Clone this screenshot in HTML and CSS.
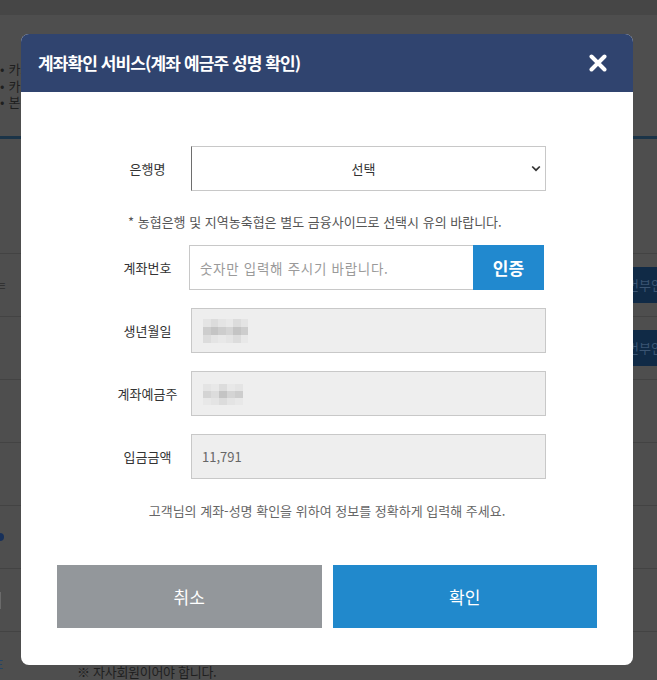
FILE: index.html
```html
<!DOCTYPE html>
<html lang="ko">
<head>
<meta charset="utf-8">
<title>계좌확인 서비스</title>
<link rel="stylesheet" href="styles.css">
</head>
<body>
<div class="page">
  <div class="topbar"></div>
  <ul class="notice">
    <li>카드 결제 시 유의사항을 확인해 주세요.</li>
    <li>카드 취소는 결제일 기준으로 처리됩니다.</li>
    <li>본인 명의의 계좌만 등록 가능합니다.</li>
  </ul>
  <div class="table">
    <div class="row row-first"></div>
    <div class="row"><span class="frag">ㅌ</span><span class="navy-btn">번부인증</span></div>
    <div class="row"><span></span><span class="navy-btn">번부인증</span></div>
    <div class="row"></div>
    <div class="row"></div>
    <div class="row"><span class="dot"></span></div>
    <div class="row"><span class="bar"></span></div>
    <div class="row row-last"><span class="frag blue">E</span><span class="foot-note">※ 자사회원이어야 합니다.</span></div>
  </div>
</div>

<div class="modal">
  <div class="modal-head">
    <h1 class="modal-title">계좌확인 서비스(계좌 예금주 성명 확인)</h1>
    <svg class="close" width="18" height="18" viewBox="0 0 18 18" aria-label="닫기">
      <path d="M2.5 2.5 L15.5 15.5 M15.5 2.5 L2.5 15.5" stroke="#fff" stroke-width="4" stroke-linecap="round" fill="none"/>
    </svg>
  </div>
  <div class="modal-body">
    <div class="form">
      <div class="form-row">
        <div class="label">은행명</div>
        <div class="select">
          <span class="select-text">선택</span>
          <svg class="chev" width="10" height="7" viewBox="0 0 10 7"><path d="M1.2 1.5 L5 5.2 L8.8 1.5" stroke="#333" stroke-width="1.7" fill="none"/></svg>
        </div>
      </div>
      <p class="note">* 농협은행 및 지역농축협은 별도 금융사이므로 선택시 유의 바랍니다.</p>
      <div class="form-row">
        <div class="label">계좌번호</div>
        <div class="input-group">
          <div class="input placeholder">숫자만 입력해 주시기 바랍니다.</div>
          <div class="auth-btn">인증</div>
        </div>
      </div>
      <div class="form-row gap">
        <div class="label">생년월일</div>
        <div class="input disabled">
          <div class="mosaic m-birth">
            <i class="c1"></i><i class="c2"></i><i class="c1"></i><i class="c3"></i><i class="c2"></i><i class="c1"></i>
            <i class="c4"></i><i class="c5"></i><i class="c4"></i><i class="c6"></i><i class="c5"></i><i class="c4"></i>
            <i class="c2"></i><i class="c1"></i><i class="c3"></i><i class="c1"></i><i class="c2"></i><i class="c3"></i>
          </div>
        </div>
      </div>
      <div class="form-row gap">
        <div class="label">계좌예금주</div>
        <div class="input disabled">
          <div class="mosaic m-name">
            <i class="c1"></i><i class="c3"></i><i class="c2"></i><i class="c3"></i><i class="c1"></i>
            <i class="c6"></i><i class="c2"></i><i class="c5"></i><i class="c6"></i><i class="c4"></i>
            <i class="c3"></i><i class="c1"></i><i class="c2"></i><i class="c1"></i><i class="c3"></i>
          </div>
        </div>
      </div>
      <div class="form-row gap">
        <div class="label">입금금액</div>
        <div class="input disabled value">11,791</div>
      </div>
    </div>
    <p class="info">고객님의 계좌-성명 확인을 위하여 정보를 정확하게 입력해 주세요.</p>
    <div class="actions">
      <div class="btn btn-cancel">취소</div>
      <div class="btn btn-ok">확인</div>
    </div>
  </div>
</div>
</body>
</html>
```

FILE: styles.css
```css
html, body {
  margin: 0;
  padding: 0;
}
body {
  width: 657px;
  height: 680px;
  overflow: hidden;
  background: #4e4e4e;
  font-family: "Noto Sans CJK KR", "Noto Sans", sans-serif;
  position: relative;
}

/* dimmed page behind */
.page {
  width: 657px;
}
.topbar {
  height: 15px;
  background: #464646;
}
.notice {
  margin: 0;
  padding: 46px 0 0 0;
  height: 121px;
  box-sizing: border-box;
  list-style: none;
  font-size: 13px;
  line-height: 16.5px;
  color: #1f1f1f;
  white-space: nowrap;
  overflow: hidden;
}
.notice li::before {
  content: "•";
  margin-right: 4px;
}
.table {
  border-top: 3px solid #1b3448;
}
.row {
  height: 63px;
  box-sizing: border-box;
  border-bottom: 1px solid #434343;
  display: flex;
  align-items: center;
  justify-content: space-between;
  overflow: hidden;
}
.row-first {
  height: 115px;
}
.row-last {
  height: 60px;
  border-bottom: none;
  align-items: flex-start;
  justify-content: flex-start;
  padding-top: 23px;
}
.frag {
  font-size: 12px;
  color: #2c2c2c;
  margin-left: -4px;
}
.frag.blue {
  color: #24456c;
}
.foot-note {
  margin-left: 74px;
  margin-top: 7px;
  font-size: 13px;
  color: #1f1f1f;
  letter-spacing: -0.3px;
  white-space: nowrap;
}
.navy-btn {
  width: 64px;
  height: 36px;
  margin-right: -40px;
  background: #102a46;
  color: #3b5573;
  font-size: 13px;
  line-height: 36px;
  padding-left: 2px;
  box-sizing: border-box;
  white-space: nowrap;
  overflow: hidden;
  text-indent: -8px;
}
.dot {
  width: 8px;
  height: 8px;
  border-radius: 50%;
  background: #17305a;
  margin-left: -4px;
}
.bar {
  width: 1px;
  height: 17px;
  background: #6a6a6a;
}

/* modal */
.modal {
  position: absolute;
  left: 21px;
  top: 34px;
  width: 612px;
  height: 631px;
  background: #fff;
  border-radius: 8px;
  overflow: hidden;
}
.modal-head {
  height: 58px;
  background: #30446f;
  display: flex;
  align-items: center;
  justify-content: space-between;
  padding: 0 26px 0 17px;
  box-sizing: border-box;
}
.modal-title {
  margin: 0;
  color: #fff;
  font-size: 17px;
  font-weight: 700;
  letter-spacing: -0.9px;
  line-height: 20px;
}
.close {
  display: block;
}
.modal-body {
  padding-top: 54px;
}
.form {
  margin-left: 83px;
  width: 442px;
}
.form-row {
  display: grid;
  grid-template-columns: 87px 355px;
  align-items: center;
  height: 45px;
}
.form-row.gap {
  margin-top: 18px;
}
.label {
  text-align: center;
  font-size: 13px;
  color: #333;
  letter-spacing: 0;
}
.select {
  height: 45px;
  box-sizing: border-box;
  border: 1px solid #c8c8c8;
  border-left-color: #6e6e6e;
  display: flex;
  align-items: center;
  padding-right: 4px;
}
.select-text {
  flex: 1;
  text-align: center;
  font-size: 13px;
  color: #333;
  padding-left: 4px;
}
.chev {
  display: block;
}
.note {
  margin: 22px 0 14px 0;
  padding-left: 24px;
  font-size: 13px;
  line-height: 18px;
  color: #555;
  letter-spacing: 0;
  white-space: nowrap;
}
.input-group {
  display: flex;
  height: 45px;
  margin-left: -2px;
}
.input {
  height: 45px;
  box-sizing: border-box;
  border: 1px solid #c8c8c8;
  display: flex;
  align-items: center;
  padding-left: 10px;
  font-size: 13px;
}
.input-group .input {
  width: 284px;
  border-right: none;
}
.placeholder {
  color: #9a9a9a;
  font-size: 13.5px;
  letter-spacing: 0.7px;
}
.auth-btn {
  width: 71px;
  height: 45px;
  background: #2189cf;
  color: #fff;
  font-size: 17px;
  font-weight: 700;
  display: flex;
  align-items: center;
  justify-content: center;
}
.disabled {
  background: #eeeeee;
}
.value {
  color: #666;
}
.mosaic {
  display: grid;
  margin-left: 1px;
}
.mosaic i {
  display: block;
}
.m-birth {
  grid-template-columns: repeat(6, 7.5px);
  grid-auto-rows: 8px;
}
.m-name {
  grid-template-columns: repeat(5, 8px);
  grid-auto-rows: 7px;
  margin-top: 2px;
}
.c1 { background: #e4e4e4; }
.c2 { background: #dcdcdc; }
.c3 { background: #e8e8e8; }
.c4 { background: #cdcdcd; }
.c5 { background: #c4c4c4; }
.c6 { background: #d4d4d4; }

.info {
  margin: 23px 0 0 0;
  text-align: center;
  font-size: 13px;
  line-height: 18px;
  color: #666;
  letter-spacing: 0;
}
.actions {
  display: flex;
  gap: 11px;
  padding: 0 36px;
  margin-top: 45px;
}
.btn {
  flex: 1;
  height: 63px;
  display: flex;
  align-items: center;
  justify-content: center;
  color: #fff;
  font-size: 17px;
}
.btn-cancel {
  background: #93979b;
}
.btn-ok {
  background: #2189cc;
}
```
